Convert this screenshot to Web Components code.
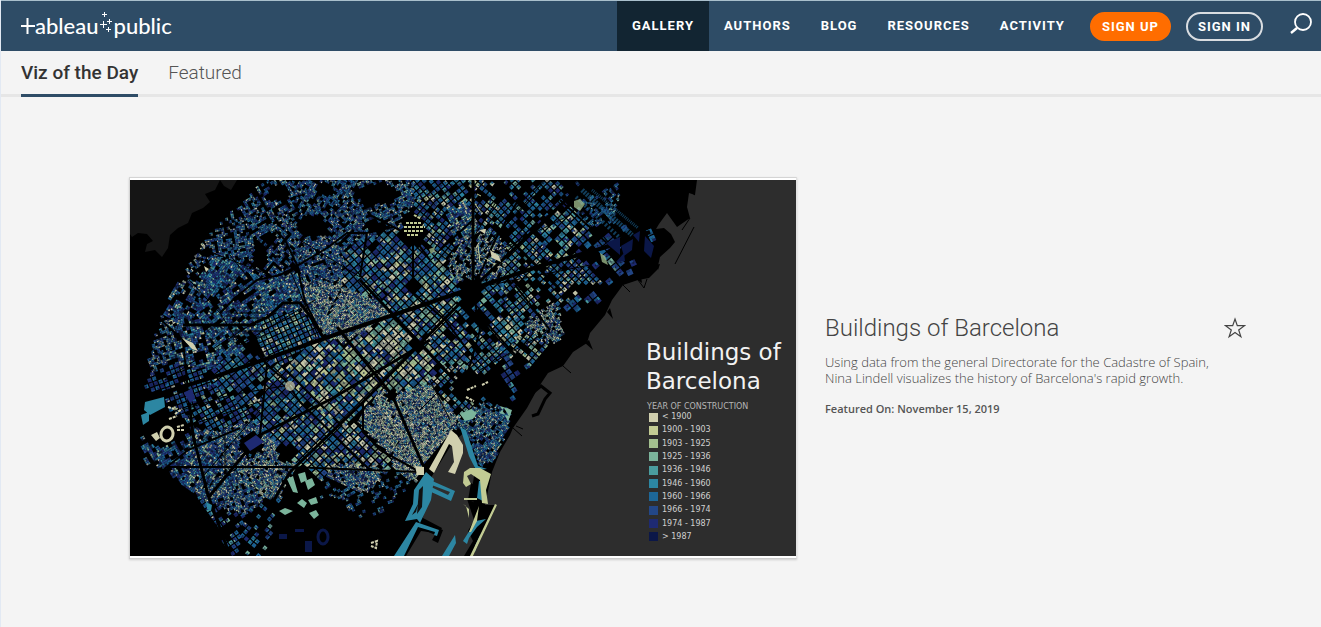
<!DOCTYPE html>
<html lang="en">
<head>
<meta charset="utf-8">
<title>Gallery | Tableau Public</title>
<style>
  body { margin: 0; background: #f4f4f4; font-family: Roboto, "Liberation Sans", sans-serif; color: #444; }
</style>
</head>
<body>
<public-app></public-app>

<script>
function define(name, html, init) {
  const template = document.createElement('template');
  template.innerHTML = html;
  customElements.define(name, class extends HTMLElement {
    constructor() {
      super();
      this.attachShadow({ mode: 'open' }).append(template.content.cloneNode(true));
    }
    connectedCallback() { if (init) init(this.shadowRoot, this); }
  });
}

define('public-logo', `
<style>
  :host { display: block; }
  a { display: flex; align-items: center; height: 50px; color: #fff; text-decoration: none; font: 500 22px/28px Lato, sans-serif; }
  svg { display: block; flex: none; }
  .mark { stroke: #fff; fill: none; }
</style>
<a href="#" aria-label="Tableau Public home">
  <svg class="mark" width="14" height="50" stroke-width="2"><path d="M0 25H14M6.500 17V33"/></svg>
  <span>ableau</span>
  <svg class="mark" width="15" height="50" stroke-width="1"><path d="M1 23.500H8M4.500 20V27M3 13.500H8M5.500 11V16M8 20.500H13M10.500 18V23M7 28.500H12M9.500 26V31"/></svg>
  <span>public</span>
</a>`);

define('nav-item', `
<style>
  :host { display: block; }
  a { display: block; padding: 0 15px; font: 700 13px/50px Roboto, sans-serif; letter-spacing: 1px; color: #fff; text-decoration: none; }
  :host([active]) a { background: #122532; }
</style>
<a href="#"><slot></slot></a>`);

define('pill-button', `
<style>
  :host { display: block; margin-left: 15px; }
  button { box-sizing: border-box; height: 29px; padding: 0 10px; border: 2px solid #d9dde1; border-radius: 15px; background: none;
    font: 700 13px/25px Roboto, sans-serif; letter-spacing: 1px; color: #fff; display: block; }
  :host([primary]) { margin-left: 10px; }
  :host([primary]) button { background: #ff6d00; border-color: #ff6d00; }
</style>
<button type="button"><slot></slot></button>`);

define('site-header', `
<style>
  :host { display: flex; align-items: center; height: 50px; background: #2e4c66; border-top: 1px solid #a9bfcc; }
  public-logo { margin-left: 20px; }
  nav { display: flex; align-items: center; margin-left: auto; }
  .search { margin: 0 8px 4px 26px; padding: 0; border: 0; background: none; height: 26px; }
  svg { display: block; }
</style>
<public-logo></public-logo>
<nav aria-label="Main">
  <nav-item active>GALLERY</nav-item>
  <nav-item>AUTHORS</nav-item>
  <nav-item>BLOG</nav-item>
  <nav-item>RESOURCES</nav-item>
  <nav-item>ACTIVITY</nav-item>
  <pill-button primary>SIGN UP</pill-button>
  <pill-button>SIGN IN</pill-button>
  <button class="search" type="button" aria-label="Search">
    <svg width="24" height="26" fill="none" stroke="#fff"><circle cx="14" cy="11" r="8" stroke-width="1.800"/><path d="M8 17L2 22" stroke-width="2.400"/></svg>
  </button>
</nav>`);

define('gallery-tabs', `
<style>
  :host { display: block; height: 43px; border-bottom: 3px solid #e6e6e6; }
  nav { display: flex; gap: 30px; padding-left: 20px; }
  a { box-sizing: border-box; height: 46px; border-bottom: 3px solid transparent; font: 300 19px/43px Roboto, sans-serif; color: #555; text-decoration: none; }
  a[aria-current] { font-weight: 500; color: #333; border-color: #2e4c66; }
</style>
<nav aria-label="Gallery">
  <a href="#" aria-current="page">Viz of the Day</a>
  <a href="#">Featured</a>
</nav>`);

define('legend-row', `
<style>
  :host { display: flex; align-items: center; height: 12px; gap: 4px; }
  i { width: 9px; height: 9px; background: var(--swatch); }
</style>
<i></i><slot></slot>`);

const PALETTE = ['#d0cfae', '#c2cb93', '#a3c08f', '#7bb49b', '#4a9d9f', '#2c86a2', '#1d6798', '#234788', '#1e2a72', '#0b1748'];

/* Footprints of the city, grouped by colour and laid out district by district on rotated street grids. */
function drawCity(svg) {
  let seed = 1987;
  const rnd = () => {
    seed = (seed + 0x6D2B79F5) | 0;
    let t = Math.imul(seed ^ (seed >>> 15), 1 | seed);
    t = (t + Math.imul(t ^ (t >>> 7), 61 | t)) ^ t;
    return ((t ^ (t >>> 14)) >>> 0) / 4294967296;
  };
  /* x, y, street angle, block pitch, share of old buildings, share of teal, density */
  const D = [
    [22, 160, 20, 3, .40, .35, .80], [40, 110, 60, 4, .22, .3, .55], [62, 170, 15, 4, .22, .4, .6], [60, 75, 35, 3, .4, .2, .4],
    [95, 55, 10, 3, .22, .4, .6], [90, 100, 55, 4, .12, .5, .82], [130, 30, 30, 3, .22, .4, .55], [55, 205, 20, 5, .04, .15, .65],
    [100, 150, 40, 4, .12, .6, .75], [100, 115, 35, 4, .15, .45, .7], [150, 75, 50, 3, .25, .3, .55], [155, 115, 35, 4, .2, .5, .85],
    [160, 150, 25, 5, .25, .6, .9], [200, 15, 60, 3, .12, .45, .65], [210, 40, 45, 3, .22, .4, .6], [190, 85, 20, 3, .28, .35, .82],
    [190, 118, 62, 3, .72, .45, .9], [217, 132, 40, 3, .75, .4, .92], [235, 90, 42, 6, .16, .35, .9], [250, 25, 25, 3, .2, .45, .6],
    [275, 75, 45, 6, .22, .45, .95], [285, 100, 45, 6, .28, .5, .95], [310, 45, 50, 5, .18, .5, .85], [330, 40, 30, 4, .36, .45, .85],
    [320, 8, 40, 5, .12, .55, .7], [305, 130, 45, 6, .42, .45, .95], [245, 175, 45, 7, .78, .4, 1], [285, 180, 45, 7, .80, .4, 1],
    [190, 185, 45, 7, .48, .45, .95], [215, 215, 45, 7, .66, .35, .95], [110, 200, 40, 6, .08, .35, .85], [155, 220, 45, 6, .20, .45, .9],
    [170, 245, 45, 6, .30, .35, .9], [90, 230, 30, 5, .10, .35, .8], [45, 268, 30, 4, .08, .4, .7], [75, 275, 55, 4, .35, .35, .85],
    [100, 265, 35, 3, .42, .35, .85], [132, 288, 60, 3, .58, .4, .85], [105, 315, 20, 3, .35, .35, .75], [195, 265, 45, 6, .48, .35, .95],
    [230, 270, 45, 6, .55, .3, .95], [225, 298, 65, 3, .60, .35, .8], [255, 245, 60, 3, .88, .35, .9], [300, 228, 35, 3, .86, .5, .95],
    [290, 262, 50, 3, .86, .4, .92], [322, 208, 45, 5, .4, .4, .65], [325, 165, 45, 6, .38, .4, .8], [352, 25, 50, 5, .36, .5, .7],
    [352, 75, 60, 3, .60, .4, .65], [385, 40, 45, 5, .06, .55, .62], [410, 20, 45, 5, .05, .5, .6], [435, 55, 45, 6, .28, .65, .75],
    [400, 80, 45, 5, .28, .65, .75], [470, 25, 40, 3, .02, .6, .5], [475, 65, 40, 7, .02, .12, .5], [435, 105, 45, 5, .30, .4, .65],
    [400, 125, 42, 5, .30, .6, .7], [412, 142, 30, 3, .76, .4, .7], [380, 155, 42, 6, .42, .65, .88], [355, 170, 42, 5, .3, .6, .8],
    [395, 165, 50, 5, .5, .5, .7], [350, 130, 42, 6, .22, .6, .65], [450, 135, 40, 7, 0, .05, .3], [510, 62, 25, 7, 0, 0, .2],
    [505, 30, 40, 3, 0, 0, 0], [460, 6, 40, 3, 0, 0, .05], [540, 50, 40, 3, 0, 0, 0],
    [380, 195, 35, 6, .04, .1, .5], [355, 255, 55, 3, .30, .5, .75], [95, 345, 35, 5, .04, .25, .6], [130, 350, 50, 5, .03, .2, .35],
    [215, 320, 30, 3, .2, .55, .35], [250, 325, 20, 3, .06, .45, .25]
  ];
  /* parks and hills without buildings: x, y, radius x, radius y */
  const holes = [[150, 14, 11, 8], [182, 46, 17, 12], [140, 57, 7, 6], [130, 75, 7, 13], [165, 88, 5, 4], [246, 14, 24, 11], [280, 40, 10, 7], [195, 10, 10, 7],
    [245, 47, 8, 6], [113, 117, 5, 5], [122, 165, 7, 8], [107, 34, 5, 4], [342, 112, 12, 14], [285, 105, 7, 6], [288, 164, 6, 5], [157, 273, 10, 10],
    [262, 216, 5, 6], [35, 248, 26, 16], [23, 235, 18, 20], [122, 264, 13, 12], [342, 207, 19, 17], [370, 10, 10, 8], [365, 215, 10, 10], [20, 216, 15, 5],
    [352, 140, 9, 8], [475, 92, 14, 5], [172, 312, 20, 24], [284, 50, 13, 15], [245, 66, 4, 3], [455, 110, 7, 6]];
  const inland = [[135, 0], [540, 0], [540, 48], [524, 78], [502, 92], [478, 108], [462, 132], [442, 150], [420, 168], [400, 190], [386, 210], [378, 250], [364, 280], [350, 286],
    [334, 248], [322, 250], [290, 292], [284, 306], [270, 320], [232, 345], [210, 318], [165, 316], [146, 325], [140, 376], [103, 376], [70, 320], [37, 290], [16, 284], [0, 200], [30, 100]];
  const inside = (x, y) => {
    let hit = false;
    for (let i = 0, j = inland.length - 1; i < inland.length; j = i++) {
      const [a, b] = inland[i], [c, d] = inland[j];
      if ((b > y) !== (d > y) && x < (c - a) * (y - b) / (d - b) + a) hit = !hit;
    }
    return hit;
  };
  const open = (x, y) => {
    const r = Math.hypot(x - 325, y - 250);
    if (r > 314 || (r > 300 && rnd() < .25) || !inside(x, y)) return false;
    return !holes.some(h => ((x - h[0]) / h[2]) ** 2 + ((y - h[1]) / h[3]) ** 2 < .75 + rnd() * .45);
  };
  const nearest = (x, y) => {
    let best = 0, m = 1e9;
    D.forEach((d, i) => { const q = (d[0] - x) ** 2 + (d[1] - y) ** 2; if (q < m) { m = q; best = i; } });
    return best;
  };
  const shapes = PALETTE.map(() => ['', '']);
  let ground = '';
  const pick = (old, teal) => {
    const r = rnd();
    if (r < old * .85) return [0, 0, 0, 1, 2, 3][Math.floor(rnd() * 6)];
    return rnd() < teal ? [3, 4, 5, 5, 6, 6][Math.floor(rnd() * 6)] : [6, 6, 7, 7, 8, 8][Math.floor(rnd() * 6)];
  };
  D.forEach(([cx, cy, deg, pitch, old, teal, density], index) => {
    const c = Math.cos(-deg * Math.PI / 180), s = Math.sin(-deg * Math.PI / 180);
    const quad = (u, v, w, h) => 'M' + [[u, v], [u + w, v], [u + w, v + h], [u, v + h]]
      .map(([a, b]) => (a * c - b * s).toFixed(1) + ' ' + (a * s + b * c).toFixed(1)).join('L') + 'Z';
    const put = (u, v, w, h, colour) => { shapes[colour][rnd() < .6 ? 0 : 1] += quad(u, v, w, h); };
    const u0 = Math.round((cx * c + cy * s) / pitch) * pitch, v0 = Math.round((cy * c - cx * s) / pitch) * pitch;
    for (let u = u0 - 72; u < u0 + 72; u += pitch) for (let v = v0 - 72; v < v0 + 72; v += pitch) {
      const x = (u + pitch / 2) * c - (v + pitch / 2) * s, y = (u + pitch / 2) * s + (v + pitch / 2) * c;
      if (x < 0 || y < 0 || y > 376 || nearest(x, y) !== index || !open(x, y) || rnd() > density + .08 * (density > .5)) continue;
      if (pitch < 5) {
        const n = pitch / 2;
        ground += quad(u, v, pitch, pitch);
        for (let a = 0; a < 2; a++) for (let b = 0; b < 2; b++) if (rnd() < .84) put(u + a * n, v + b * n, n * (.75 + rnd() * .35), n * (.7 + rnd() * .35), pick(old, teal));
      } else {
        const w = pitch - 1.3, t = w * .38, main = pick(old, teal), other = () => rnd() < .6 ? main : pick(old, teal);
        ground += quad(u, v, w, w);
        put(u, v, w - t, t, other()); put(u + w - t, v, t, w - t, other());
        put(u + t, v + w - t, w - t, t, other()); put(u, v + t, t, w - t, other());
        if (rnd() < .65) put(u + t, v + t, w - 2 * t, w - 2 * t, main);
      }
    }
  });
  svg.querySelector('.city').innerHTML = `<path fill="#1b2f63" opacity=".5" d="${ground}"/>` + shapes.map((pair, i) =>
    `<path fill="${PALETTE[i]}" opacity=".95" d="${pair[0]}"/><path fill="${PALETTE[i]}" opacity=".65" d="${pair[1]}"/>`).join('');
}

define('barcelona-map', `
<style>
  :host { display: block; position: relative; background: #000; aspect-ratio: 666 / 376; overflow: hidden; }
  svg { display: block; width: 100%; height: 100%; }
  .key { position: absolute; right: 12px; bottom: 13px; width: 138px; color: #d0d0d0; font: 8px/12px "DejaVu Sans", sans-serif; }
  h3 { margin: 0 0 6px; font: 400 23px/29px "DejaVu Sans", sans-serif; color: #f2f2f2; white-space: nowrap; }
  p { margin: 0 0 0 1px; line-height: 9px; color: #b5b5b5; white-space: nowrap; }
  .rows { display: flex; flex-direction: column; justify-content: space-between; height: 132px; margin-left: 3px; }
</style>
<svg viewBox="0 0 666 376" role="img" aria-label="Map of Barcelona coloured by year of construction">
  <path fill="#151515" d="M0 0H90L85 10L75 14L80 22L73 28L62 33L58 43L48 48L40 55L38 68L32 77L25 70L15 72L17 64L23 61L17 54L8 53L2 57L0 54ZM90 0H107L101 10L94 6Z"/>
  <path fill="#2d2d2d" d="M567 0H666V376H343L367 325L355 325L362 292L370 272L380 255L383 248L397 228L408 208L418 193L433 186L443 172L457 163L460 153L475 135L482 120L493 105L508 100L519 98L527 90L530 77L540 68L545 62L541 54L534 48L526 49L529 44L537 33L547 47L560 38L557 27L559 13L565 15Z"/>
  <path fill="#2d2d2d" d="M323 262L335 252L345 290L341 315L348 333L338 351L343 361L334 376H274L291 349L308 356L312 348L293 338L296 312L302 296Z"/>
  <g class="city"></g>
  <g fill="none" stroke="#000">
    <path stroke-width="4" d="M0 223L90 195L210 153L340 109M345 108L410 86L473 68L520 52"/>
    <path stroke-width="3" d="M343 0V110M345 106L385 68L457 0M160 292L233 222L341 112M78 318L130 255L203 218L300 160M207 147L262 215L296 292M230 100L290 163L350 228M130 345L160 292M53 145H120L138 137L153 123H170L180 136L193 157M58 212L63 255L78 315L100 376"/>
    <path stroke-width="2" d="M90 133L105 118L127 100L150 95L160 90L197 68L217 53H237L263 47M237 53L230 97M283 57V110M37 287H160L290 292M137 185L130 255M167 85L155 60L145 50M120 165L137 185L155 200L170 222M343 110L350 150L330 220M400 0L365 60L345 106M20 130L53 160L58 212M33 290L58 270L110 248M233 222V252L250 270L290 292M310 70L343 40M193 157L175 122L167 85M380 60L430 110M430 20L490 75M385 105L420 150M345 130L385 175M170 222L240 290M280 110L315 140L345 180M240 35L283 57L300 80"/>
    <path stroke-width="1" d="M100 75L120 100M50 90L90 133M90 133L110 165M110 165L185 120M75 70L140 95M35 200L120 145M20 240L100 215L160 205M60 245L135 220M70 300L130 230M95 255V300M170 60L230 97M160 90L190 160M100 133H135M100 138H135M100 151H135M100 157H135M380 0L345 55M415 0L350 75M350 80L440 35M360 105L460 85M350 190L420 150M290 230L330 190M300 200L320 240"/>
  </g>
  <g fill="none" stroke="#1d6798" opacity=".6">
    <path stroke-width="5" stroke-dasharray="2 1" d="M452 10L502 55"/>
    <path stroke-width="4" stroke-dasharray="2 2" d="M446 17L490 58"/>
    <path stroke-width="3" stroke-dasharray="1 1" d="M462 10L508 48"/>
  </g>
  <g fill="#000">
    <path d="M530 77L526 73L532 61L536 63ZM530 84L528 90L524 85ZM505 98L512 103L511 96ZM477 132L483 139L480 128ZM455 163L463 170L459 160Z"/>
    <path d="M291 342L313 350L308 363L302 360L306 353L291 351L276 376H268L284 344ZM341 303L356 312L352 324L338 320ZM337 319L352 326L362 331L355 342L344 340Z"/>
    <path fill="none" stroke="#000" d="M565 15L548 2M564 47L545 84M560 38L552 50M433 186L441 193M508 100L514 108L517 99M493 105L500 112M383 248L392 256M386 246L393 249"/>
    <path fill="none" stroke="#000" stroke-width="3" d="M400 215L411 206L420 213L415 219L408 234L402 236"/>
  </g>
  <g fill="#2c86a2">
    <path d="M15 222L34 217L35 227L20 235L14 230ZM11 235L19 232V241L13 245ZM296 292L304 299L301 320L290 343L287 339L275 341L283 324L284 310ZM300 300L325 311L321 321L299 311L301 307L318 315L320 312L299 304ZM286 342L309 350L307 356L304 355L305 352L288 347L274 376H264ZM325 355L326 363L319 376H312ZM330 247L336 250L348 286L357 289L346 290L339 276ZM349 301H355L353 321L347 318ZM76 322L82 325L81 331L77 329ZM338 353L346 341L356 339L347 347L339 358L337 364L333 361ZM345 366L351 353L345 372Z"/>
  </g>
  <path fill="#101010" d="M289 310L293 306L292 327L287 334ZM286 332L282 335L288 324Z"/>
  <path fill="#d0cfae" d="M321 250L327 255L333 265V273L325 294L318 292L324 282L322 266L319 264L304 293L299 289ZM285 286L294 287V295H287ZM21 255L27 252L30 258L26 261Z"/>
  <path fill="#c2cb93" d="M334 292L340 288H350L361 294L356 310L358 324L352 323L350 300L341 294L337 296L341 304L336 307L333 303ZM334 318H347V320H334ZM333 324L339 329V338L336 326ZM349 326L347 341L341 352L339 352ZM365 324L367 325L343 376H340Z"/>
  <g fill="#7bb49b">
    <path d="M157 299L163 296L168 313L163 312ZM168 294L175 292L177 300L171 303ZM175 301L182 298L185 305L178 310ZM178 320L186 317L188 323L181 325ZM167 323L172 319L177 323L174 328ZM179 333L186 330L189 335L184 339ZM149 331L155 328L163 331L155 335ZM330 234L341 229L347 233L343 239L335 241ZM370 226L382 230L378 242L375 235ZM369 233L379 236L374 228Z"/>
  </g>
  <g fill="#1e2a72"><path d="M114 263L126 255L134 262L120 271ZM54 213L62 208L65 219L60 223Z"/></g>
  <g fill="#0b1748"><path d="M149 354H157V359H149ZM175 361H182V372H175ZM476 63L490 57V75ZM491 66L503 59L502 70L494 76ZM503 55L510 51L509 62ZM515 56L524 66L521 78L514 71ZM486 82L494 73L495 81ZM165 349H174V352H165Z"/></g>
  <g fill="none">
    <ellipse cx="37" cy="254" rx="6" ry="7" stroke="#d0cfae" stroke-width="3" transform="rotate(15 37 254)"/>
    <ellipse cx="193" cy="357" rx="5" ry="7" stroke="#0b1748" stroke-width="3"/>
    <path stroke="#d0cfae" stroke-width="2" stroke-dasharray="3 1" d="M38 227L44 229M45 234L52 229M39 239L47 236M47 247L54 245M47 250H54M241 363L247 361L246 368L241 366M337 210L346 206M352 205L358 202M336 217L344 221"/>
    <path stroke="#c2cb93" stroke-width="2" stroke-dasharray="3 1" d="M276 43H292M274 47H295M274 51H294M277 55H289M284 35L291 39"/>
    <path stroke="#c2cb93" d="M347 14L351 16M345 24L350 31M355 78L364 84M348 65L350 83"/>
  </g>
  <g fill="#a3c08f"><path d="M299 69L305 67L304 72L301 74ZM444 21L450 19L455 24L450 31L444 27ZM470 73L475 76L478 85L472 82Z" opacity=".75"/></g>
  <path fill="#d0cfae" d="M52 158L63 163L68 171L62 169ZM145 22L148 23L146 26ZM349 50L356 49L355 54ZM74 86L79 89L76 92ZM360 70L369 76L371 82L362 78Z"/>
  <circle cx="160" cy="206" r="5" fill="#d0cfae" opacity=".7"/>
</svg>
<div class="key">
  <h3>Buildings of<br>Barcelona</h3>
  <p>YEAR OF CONSTRUCTION</p>
  <div class="rows"></div>
</div>`, root => {
  drawCity(root.querySelector('svg'));
  const labels = ['< 1900', '1900 - 1903', '1903 - 1925', '1925 - 1936', '1936 - 1946', '1946 - 1960', '1960 - 1966', '1966 - 1974', '1974 - 1987', '> 1987'];
  root.querySelector('.rows').append(...labels.map((label, i) => {
    const row = document.createElement('legend-row');
    row.textContent = label;
    row.style.setProperty('--swatch', PALETTE[i]);
    return row;
  }));
});

define('viz-details', `
<style>
  :host { display: block; padding-bottom: 6px; }
  header { display: flex; justify-content: space-between; align-items: center; margin-bottom: 12px; }
  h2 { margin: 0; font: 300 24px/28px Roboto, sans-serif; color: #444; }
  h2 a { color: inherit; text-decoration: none; }
  header button { border: 0; padding: 0; background: none; }
  svg { display: block; }
  p { margin: 0; font: 300 13px/16px "Open Sans", sans-serif; color: #444; max-width: 400px; }
  .date { margin-top: 15px; font-weight: 600; font-size: 11px; color: #555; }
</style>
<header>
  <h2><a href="#">Buildings of Barcelona</a></h2>
  <button type="button" aria-label="Add to favorites">
    <svg width="22" height="22" viewBox="0 0 22 22" fill="none" stroke="#444" stroke-width="1.200"><path d="M11 2L13.300 8.700H20.500L14.700 12.900L16.900 19.800L11 15.600L5.100 19.800L7.300 12.900L1.500 8.700H8.700Z"/></svg>
  </button>
</header>
<p>Using data from the general Directorate for the Cadastre of Spain, Nina Lindell visualizes the history of Barcelona's rapid growth.</p>
<p class="date">Featured On: November 15, 2019</p>`);

define('viz-feature', `
<style>
  :host { display: grid; grid-template-columns: 668fr 421fr; gap: 28px; align-items: center; padding: 80px 75px 68px 128px; }
  .frame { background: #fff; border: 1px solid #d4d4d4; border-right-color: #e2e2e2; border-bottom-color: #ccc; padding: 2px 0; box-shadow: 0 1px 2px #ccc; }
</style>
<div class="frame"><barcelona-map></barcelona-map></div>
<viz-details></viz-details>`);

define('public-app', `
<style>
  :host { display: block; box-sizing: border-box; min-height: 100vh; border-left: 1px solid #e2e9f3; }
</style>
<site-header></site-header>
<gallery-tabs></gallery-tabs>
<main><viz-feature></viz-feature></main>`);
</script>
</body>
</html>
